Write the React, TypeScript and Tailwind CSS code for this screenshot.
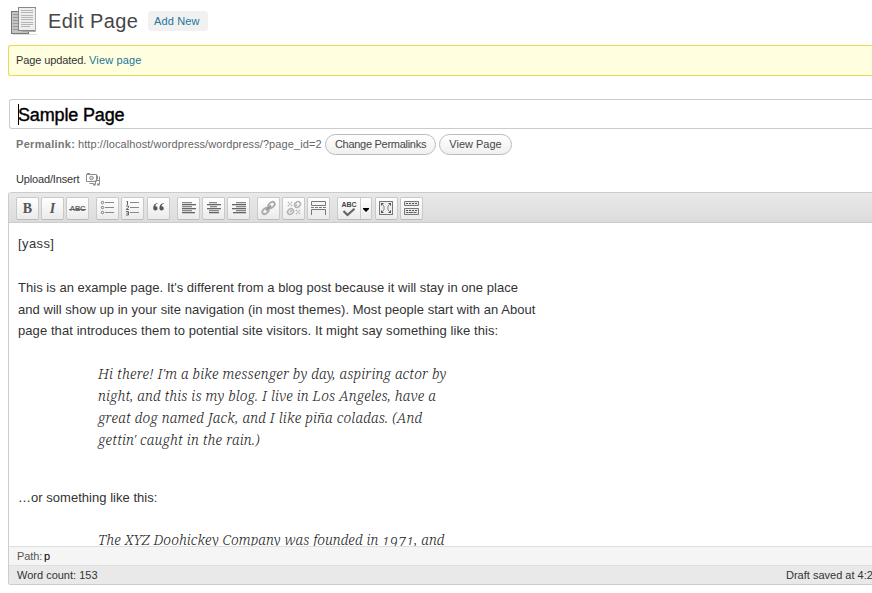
import type { ReactNode } from "react";

const sans = "font-['Liberation_Sans',Arial,sans-serif]";

function Tool({ children, wide = false }: { children: ReactNode; wide?: boolean }) {
  return (
    <div
      className={
        "flex h-[23px] shrink-0 items-center justify-center rounded-[2px] border border-[#c9c9c9] border-b-[#bbb] bg-linear-to-b from-white to-[#ebebeb] " +
        (wide ? "w-[35px]" : "w-[23px]")
      }
    >
      {children}
    </div>
  );
}

function Glyph({ children }: { children: ReactNode }) {
  return (
    <svg width="21" height="21" viewBox="0 0 21 21" className="shrink-0" fill="none">
      {children}
    </svg>
  );
}

function Group({ children }: { children: ReactNode }) {
  return <div className="flex gap-[2px]">{children}</div>;
}

function Align({ rows }: { rows: [number, number][] }) {
  return (
    <Glyph>
      {rows.map(([x, w], i) => (
        <rect key={i} x={x} y={4 + i * 2} width={w} height="1.300" fill={i % 2 ? "#666" : "#888"} />
      ))}
    </Glyph>
  );
}

function PagesIcon() {
  return (
    <svg width="28" height="30" viewBox="0 0 28 30" fill="none">
      <path d="M3 28.500h24" stroke="#ddd" />
      <rect x="1.500" y="5.500" width="17" height="22" fill="#c4c4c4" stroke="#777" />
      <path d="M3 8.500h5M3 11.500h5M3 14.500h5M3 17.500h5M3 20.500h5M3 23.500h5" stroke="#999" />
      <rect x="8.500" y="1.500" width="17" height="23" fill="#eee" stroke="#888" />
      <path d="M11 4.500h12M11 6.500h12M11 9.500h12M11 11.500h12M11 13.500h12M11 16.500h12M11 18.500h12M11 20.500h9" stroke="#b5b5b5" />
      <path d="M25.500 3v22.500H12" stroke="#aaa" />
    </svg>
  );
}

function MediaIcon() {
  return (
    <svg width="15" height="14" viewBox="0 0 15 14" fill="none" stroke="#8c8c8c">
      <path d="M.500 2.500h10v7h-10zM1 1.500h3" />
      <circle cx="5.500" cy="6" r="1.800" fill="#ddd" />
      <path d="M3.500 11.500h4M13.500 4.500v8M9.500 8.500v4M9.500 8.500h4M11.500 3.500v4" />
      <path d="M7 12.500h2.500M11 12.500h2.500" strokeWidth="2" />
    </svg>
  );
}

function Toolbar() {
  return (
    <div className="flex h-[31px] shrink-0 items-start gap-[7px] rounded-tl-[3px] border-y border-[#ccc] bg-linear-to-b from-[#e9e9e9] to-[#dcdcdc] pt-[4px] pl-[7px]">
      <Group>
        <Tool>
          <span className="font-['Liberation_Serif',serif] text-[14px] leading-none font-bold text-[#555]">B</span>
        </Tool>
        <Tool>
          <span className="font-['Liberation_Serif',serif] text-[14px] leading-none font-bold text-[#555] italic">I</span>
        </Tool>
        <Tool>
          <span className="relative text-[7.5px] leading-none font-bold tracking-[-0.3px] text-[#666]">
            ABC
            <span className="absolute top-[4px] -left-px h-px w-[17px] bg-[#666]" />
          </span>
        </Tool>
      </Group>
      <Group>
        <Tool>
          <Glyph>
            {[4.5, 9.5, 14.5].map((y) => (
              <g key={y} stroke="#777">
                <circle cx="5.500" cy={y} r="1.200" />
                <path d={`M8 ${y}h9`} stroke="#888" />
              </g>
            ))}
          </Glyph>
        </Tool>
        <Tool>
          <Glyph>
            <path d="M4.500 4l1-1v4M4 8h2.500v1.500L4 11.500h3M4 13.500h2.500v3.500H4M4.500 15.200h2" stroke="#666" />
            <path d="M8 4.500h9M8 9.500h9M8 14.500h9" stroke="#888" />
          </Glyph>
        </Tool>
        <div className="ml-px">
          <Tool>
            <Glyph>
              <path
                d="M9.500 5C6.500 5.500 5.200 7.500 5.200 10.500a2.200 2.200 0 1 0 2.200-2.300C7.400 7 8.200 6 9.700 5.500zM15.700 5C12.700 5.500 11.400 7.500 11.400 10.500a2.200 2.200 0 1 0 2.200-2.300C13.600 7 14.400 6 15.900 5.500z"
                fill="#555"
              />
            </Glyph>
          </Tool>
        </div>
      </Group>
      <Group>
        <Tool>
          <Align rows={[[4, 10], [4, 14], [4, 10], [4, 14], [4, 10], [4, 13]]} />
        </Tool>
        <Tool>
          <Align rows={[[6, 8], [4, 14], [7, 7], [4, 14], [6, 10], [6, 10]]} />
        </Tool>
        <Tool>
          <Align rows={[[8, 10], [4, 14], [8, 10], [4, 14], [8, 10], [5, 13]]} />
        </Tool>
      </Group>
      <Group>
        <Tool>
          <Glyph>
            <g stroke="#aaa" strokeWidth="1.800">
              <ellipse cx="13.500" cy="7" rx="3.600" ry="2.500" transform="rotate(-40 13.500 7)" />
              <ellipse cx="7.500" cy="13" rx="3.600" ry="2.500" transform="rotate(-40 7.500 13)" />
              <path d="M8 12.500l5-5" stroke="#999" />
            </g>
          </Glyph>
        </Tool>
        <Tool>
          <Glyph>
            <g stroke="#b3b3b3" strokeWidth="1.500">
              <ellipse cx="14.500" cy="6.500" rx="3.200" ry="2.500" transform="rotate(-40 14.500 6.500)" />
              <ellipse cx="7.500" cy="13.500" rx="3.200" ry="2.500" transform="rotate(-40 7.500 13.500)" />
              <path d="M12.500 8l1.500-1.500M7 14l2-2" />
              <path d="M5 4l4 4M9 4L5 8M13 12l4 4M17 12l-4 4" strokeDasharray="1.200 1" />
            </g>
          </Glyph>
        </Tool>
        <Tool>
          <Glyph>
            <path d="M3.500 7.500v-4h14v4z" fill="#f5f5f5" stroke="#777" />
            <path d="M3 9.500h15" stroke="#777" strokeDasharray="3 1" />
            <path d="M3.500 17v-5.500h14V17" fill="#eee" stroke="#777" />
          </Glyph>
        </Tool>
      </Group>
      <Group>
        <Tool wide>
          <div className="flex h-[21px] w-[23px] flex-col items-center border-r border-[#ccc] pt-[3px]">
            <span className="text-[7px] leading-[7px] font-bold text-[#444]">ABC</span>
            <svg width="14" height="9" viewBox="0 0 14 9" fill="none">
              <path d="M1.500 3l4 4L12.500.800" stroke="#666" strokeWidth="2.200" />
            </svg>
          </div>
          <svg width="10" height="20" viewBox="0 0 10 20">
            <path d="M2 9h6v1l-3 3-3-3z" fill="#000" />
          </svg>
        </Tool>
        <div className="ml-px">
          <Tool>
            <Glyph>
              <rect x="3.500" y="3.500" width="13" height="13" fill="#eee" stroke="#777" />
              <path d="M5 8V5h3zM12 5h3v3zM5 12v3h3zM15 12v3h-3z" fill="#555" />
              <path d="M6 6l2 2v4l-2 2M14 6l-2 2v4l2 2" stroke="#888" />
            </Glyph>
          </Tool>
        </div>
        <Tool>
          <Glyph>
            <path d="M3.500 3.500h14v4h-14zM3.500 10.500h14v6h-14z" fill="#e8e8e8" stroke="#777" />
            <path d="M5 5.500h11M5 12.500h11" stroke="#555" strokeDasharray="2 1" />
            <path d="M5 14.500h11" stroke="#666" strokeDasharray="2 .500 5 .500" />
          </Glyph>
        </Tool>
      </Group>
    </div>
  );
}

const pill =
  "flex h-[21px] items-center justify-center rounded-full border border-[#bbb] bg-linear-to-b from-white to-[#f0f0f0] text-[11px] text-[#464646]";
const quote =
  "font-['Noto_Serif','Liberation_Serif',Georgia,serif] font-light italic text-[14px] leading-[22px] text-[#222] [font-variant-numeric:oldstyle-nums]";

export default function App() {
  return (
    <div className={`flex h-[593px] w-[872px] flex-col overflow-hidden bg-white pl-2 whitespace-nowrap text-[#333] ${sans}`}>
      <header className="flex h-[45px] shrink-0 items-start">
        <div className="mt-[6px] ml-[2px] w-[38px]">
          <PagesIcon />
        </div>
        <h1 className="mt-[8px] w-[100px] text-[20px] leading-[26px] tracking-[0.4px] text-[#464646]">Edit Page</h1>
        <a className="mt-[11px] flex h-[20px] w-[60px] items-center rounded-[3px] bg-[#f1f1f1] pl-[6px] text-[11px] tracking-[0.15px] text-[#21759b]">
          Add New
        </a>
      </header>

      <div className="flex h-[31px] shrink-0 items-center rounded-l-[3px] border border-r-0 border-[#e6db55] bg-[#ffffe0] pl-[7px] text-[11px]">
        <span className="w-[73px] tracking-[-0.1px]">Page updated.</span>
        <a className="tracking-[0.15px] text-[#21759b]">View page</a>
      </div>

      <div className="mt-[23px] ml-px flex h-[30px] shrink-0 items-center rounded-l-[3px] border border-r-0 border-[#ccc] pl-[8px]">
        <span className="h-[21px] w-px bg-black" />
        <span className="-ml-px pt-[2px] text-[18px] leading-[20px] tracking-[-0.15px] text-black [-webkit-text-stroke:0.4px_black]">
          Sample Page
        </span>
      </div>

      <div className="mt-[5px] flex h-[21px] shrink-0 items-center pl-2 text-[11px] text-[#666]">
        <span className="w-[62px] font-bold tracking-[0.3px] text-[#777]">Permalink:</span>
        <span className="w-[247px] tracking-[0.09px]">http://localhost/wordpress/wordpress/?page_id=2</span>
        <button className={`w-[111px] tracking-[-0.28px] ${pill}`}>Change Permalinks</button>
        <button className={`ml-[3px] w-[73px] ${pill}`}>View Page</button>
      </div>

      <div className="mt-[15px] flex h-[22px] shrink-0 items-start pt-[2px] pl-2 text-[11px] leading-[14px]">
        <span className="w-[70px] tracking-[-0.16px]">Upload/Insert</span>
        <MediaIcon />
      </div>

      <section className="flex h-[393px] shrink-0 flex-col overflow-hidden rounded-l-[3px] border-b border-l border-[#ccc]">
        <Toolbar />
        <div className="h-[323px] shrink-0 overflow-hidden pt-[10px] pl-[9px] text-[13px] leading-[22px]">
          <p className="tracking-[0.4px]">[yass]</p>
          <div className="mt-[22px]">
            <p className="tracking-[0.03px]">This is an example page. It's different from a blog post because it will stay in one place</p>
            <p className="tracking-[0.04px]">and will show up in your site navigation (in most themes). Most people start with an About</p>
            <p className="-mt-px tracking-[0.08px]">page that introduces them to potential site visitors. It might say something like this:</p>
          </div>
          <blockquote className={`mt-[21px] ml-[80px] ${quote}`}>
            <p className="tracking-[0.2px]">Hi there! I'm a bike messenger by day, aspiring actor by</p>
            <p className="tracking-[0.16px]">night, and this is my blog. I live in Los Angeles, have a</p>
            <p className="tracking-[0.22px]">great dog named Jack, and I like piña coladas. (And</p>
            <p className="tracking-[0.2px]">gettin' caught in the rain.)</p>
          </blockquote>
          <p className="mt-[36px] tracking-[0.03px]">…or something like this:</p>
          <blockquote className={`mt-[20px] ml-[80px] ${quote}`}>
            <p className="tracking-[0.1px]">The XYZ Doohickey Company was founded in 1971, and</p>
          </blockquote>
        </div>
        <div className="flex h-[19px] shrink-0 items-center border-t border-[#dfdfdf] bg-[#f5f5f5] pl-2 text-[11px] text-[#555]">
          <span className="w-[27px] tracking-[-0.1px]">Path:</span>
          <span className="text-black">p</span>
        </div>
        <div className="flex h-[20px] shrink-0 items-center border-t border-[#dfdfdf] bg-[#e9e9e9] pl-2 text-[11px]">
          <span className="w-[769px] shrink-0">Word count: 153</span>
          <span>Draft saved at 4:26:10 pm.</span>
        </div>
      </section>
    </div>
  );
}
